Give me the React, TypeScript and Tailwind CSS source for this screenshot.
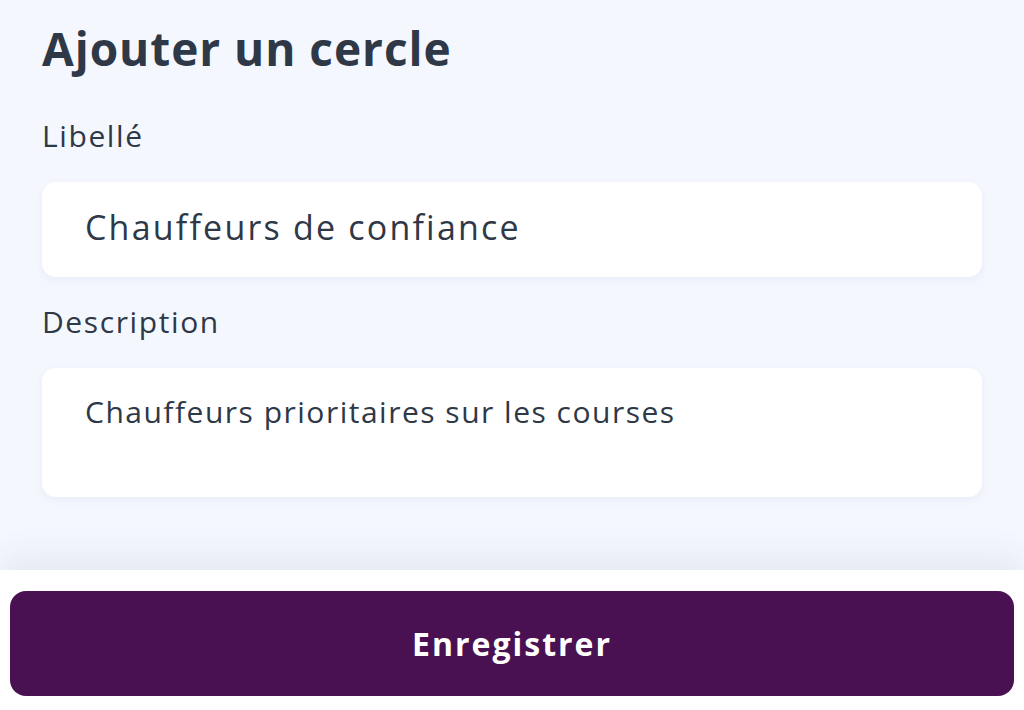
export default function App() {
  return (
    <div
      className="w-[1024px] h-[710px] flex flex-col bg-[#f4f7fe] text-[#2e3847] overflow-hidden"
      style={{ fontFamily: '"Open Sans", "Noto Sans", sans-serif' }}
    >
      {/* Form */}
      <div className="flex-1 flex flex-col px-[42px] pt-[20px]">
        <h1 className="text-[46px] leading-[56px] font-bold tracking-[0.95px]">Ajouter un cercle</h1>

        <label className="mt-[42px] text-[30px] leading-[36px] tracking-[1.6px]">Libellé</label>
        <div className="mt-[28px] h-[95px] w-[940px] bg-white rounded-[14px] shadow-[0_3px_10px_rgba(30,40,80,0.05)] flex items-center px-[43px] pb-[4px]">
          <span className="text-[34px] font-medium tracking-[2.2px]">Chauffeurs de confiance</span>
        </div>

        <label className="mt-[27px] text-[30px] leading-[36px] tracking-[1.6px]">Description</label>
        <div className="mt-[28px] h-[129px] w-[940px] bg-white rounded-[14px] shadow-[0_3px_10px_rgba(30,40,80,0.05)] px-[43px] pt-[26px]">
          <span className="text-[30px] leading-[36px] tracking-[1.5px]">Chauffeurs prioritaires sur les courses</span>
        </div>
      </div>

      {/* Footer */}
      <div className="h-[140px] bg-white shadow-[0_-14px_32px_rgba(40,50,90,0.07)] px-[10px] pt-[21px]">
        <button className="w-full h-[105px] rounded-[16px] bg-[#4a1152] text-white text-[32px] font-bold tracking-[2px]">
          Enregistrer
        </button>
      </div>
    </div>
  );
}
